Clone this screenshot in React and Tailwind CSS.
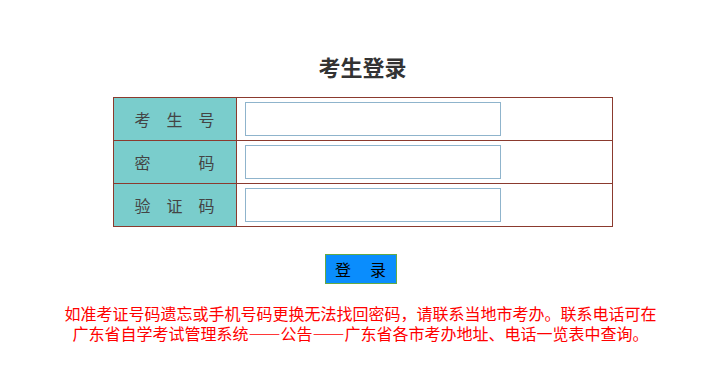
export default function App() {
  const font = { fontFamily: '"Noto Sans CJK SC", "Noto Sans", sans-serif' };
  const Label = ({ chars }) => (
    <div className="mx-auto flex w-[80px] justify-between text-[16px] leading-none text-[#444]">
      {chars.map((c, i) => (
        <span key={i}>{c}</span>
      ))}
    </div>
  );
  const Dash = () => <span className="[font-feature-settings:'fwid']">——</span>;
  const rows = [["考", "生", "号"], ["密", "码"], ["验", "证", "码"]];
  return (
    <div className="min-h-[380px] w-[705px] bg-white" style={font}>
      <div className="flex flex-col items-center pl-[20px]">
        <h1 className="mt-[51px] text-[22px] font-bold leading-[30px] text-[#333]">考生登录</h1>
        <table className="mt-[16px] w-[500px] border-collapse">
          <tbody>
            {rows.map((r, i) => (
              <tr key={i} className="h-[43px]">
                <td className="w-[123px] border border-[#8b3a2e] bg-[#7acdcc] p-0">
                  <Label chars={r} />
                </td>
                <td className="border border-[#8b3a2e] p-0 pl-[8px]">
                  <input
                    type={i === 1 ? "password" : "text"}
                    className="block h-[34px] w-[256px] border border-[#8fb4cc] bg-white outline-none"
                  />
                </td>
              </tr>
            ))}
          </tbody>
        </table>
        <button className="mr-[4px] mt-[27px] flex h-[30px] w-[72px] items-center justify-center gap-[19px] border border-[#66aa44] bg-[#0a8dfd] text-[16px] leading-none text-black">
          <span>登</span>
          <span>录</span>
        </button>
        <p className="mr-[4px] mt-[19px] text-center text-[16px] leading-[20px] text-[#ff0000]">
          如准考证号码遗忘或手机号码更换无法找回密码，请联系当地市考办。联系电话可在
          <br />
          广东省自学考试管理系统<Dash />公告<Dash />广东省各市考办地址、电话一览表中查询。
        </p>
      </div>
    </div>
  );
}
